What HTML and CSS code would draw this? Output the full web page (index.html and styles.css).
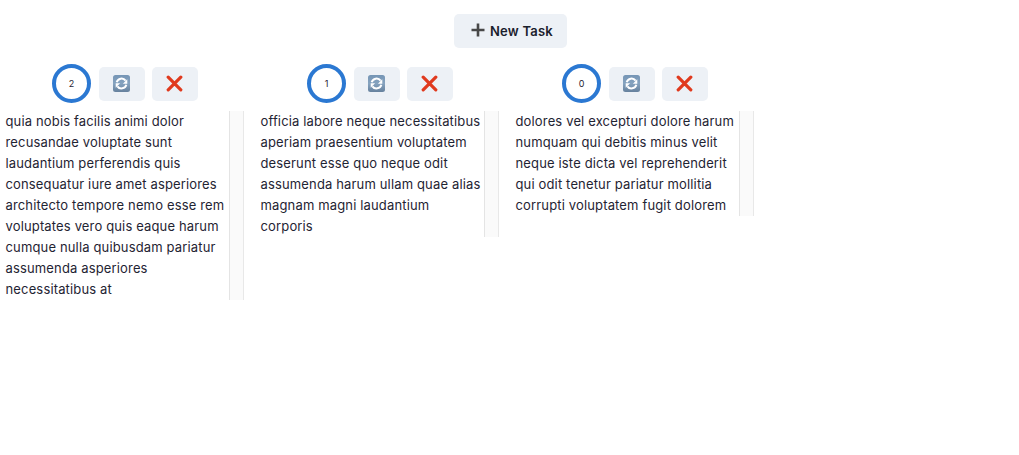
FILE: index.html
```html
<!DOCTYPE html>
<html lang="en">
<head>
<meta charset="utf-8">
<title>Tasks</title>
<link rel="stylesheet" href="styles.css">
</head>
<body>
<header class="toolbar">
<button class="btn btn-new"><svg class="plus" viewBox="0 0 14 14"><path d="M7 .5v13M.5 7h13"/></svg>New Task</button>
</header>
<svg class="defs" width="0" height="0">
<defs>
<linearGradient id="tile" x1="0" y1="0" x2="0" y2="1"><stop offset="0" stop-color="#7595b5"/><stop offset=".5" stop-color="#86a3bf"/><stop offset="1" stop-color="#66819d"/></linearGradient>
<symbol id="refresh" viewBox="0 0 17 17"><rect width="17" height="17" rx="2.500" fill="url(#tile)"/><path d="M3.700 7.300A5 5 0 0 1 12.600 5.700M13.300 9.700A5 5 0 0 1 4.400 11.300" fill="none" stroke="#fff" stroke-width="2"/><path d="M14.300 4.300v4.400H9.900zM2.700 12.700V8.300h4.400z" fill="#fff"/></symbol>
<symbol id="cross" viewBox="0 0 17 17"><path d="M2.200 2.200 14.800 14.800M14.800 2.200 2.200 14.800" fill="none" stroke="#e03a1e" stroke-width="3.200" stroke-linecap="round"/></symbol>
</defs>
</svg>
<main class="tasks">
<section class="task">
<div class="controls"><span class="ring">2</span><button class="btn"><svg class="icon"><use href="#refresh"/></svg></button><button class="btn"><svg class="icon"><use href="#cross"/></svg></button></div>
<div class="panel"><p class="text">quia nobis facilis animi dolor<br>recusandae voluptate sunt<br>laudantium perferendis quis<br>consequatur iure amet asperiores<br>architecto tempore nemo esse rem<br>voluptates vero quis eaque harum<br>cumque nulla quibusdam pariatur<br>assumenda asperiores<br>necessitatibus at</p></div>
</section>
<section class="task">
<div class="controls"><span class="ring">1</span><button class="btn"><svg class="icon"><use href="#refresh"/></svg></button><button class="btn"><svg class="icon"><use href="#cross"/></svg></button></div>
<div class="panel"><p class="text">officia labore neque necessitatibus<br>aperiam praesentium voluptatem<br>deserunt esse quo neque odit<br>assumenda harum ullam quae alias<br>magnam magni laudantium<br>corporis</p></div>
</section>
<section class="task">
<div class="controls"><span class="ring">0</span><button class="btn"><svg class="icon"><use href="#refresh"/></svg></button><button class="btn"><svg class="icon"><use href="#cross"/></svg></button></div>
<div class="panel"><p class="text">dolores vel excepturi dolore harum<br>numquam qui debitis minus velit<br>neque iste dicta vel reprehenderit<br>qui odit tenetur pariatur mollitia<br>corrupti voluptatem fugit dolorem</p></div>
</section>
</main>
</body>
</html>
```
FILE: styles.css
```css
* { box-sizing: border-box; }
body { margin: 0; background: #fff; color: #1f2433; font: 13px/21px Inter, sans-serif; }
.defs { position: absolute; }
.toolbar { display: flex; justify-content: center; padding: 14px 0 16px 2px; }
.btn { display: flex; align-items: center; justify-content: center; width: 46px; height: 34px; padding: 0 1px 1px 0; border: 0; border-radius: 5px; background: #edf1f6; color: #1a202c; font: inherit; }
.btn-new { width: 113px; gap: 5px; padding: 0 0 0 3px; font-weight: 600; letter-spacing: 0.22px; }
.plus { width: 14px; height: 14px; margin-top: -2px; fill: none; stroke: #484848; stroke-width: 2.6; }
.icon { width: 17px; height: 17px; }
.tasks { display: flex; align-items: flex-start; gap: 11px; }
.task { width: 244px; }
.controls { display: flex; align-items: center; gap: 7px; height: 40px; margin-bottom: 7px; padding-left: 52px; }
.ring { display: flex; align-items: center; justify-content: center; width: 39px; height: 39px; margin: 0 1px 2px 0; padding-top: 1px; border: 4px solid #2b78d2; border-radius: 50%; font-size: 9px; }
.panel { padding-right: 13px; border-right: 1px solid #e8e8e8; background: #fafafa; }
.text { margin: 0; padding-left: 5.5px; border-right: 1px solid #e4e4e4; background: #fff; letter-spacing: 0.15px; white-space: nowrap; }
```
